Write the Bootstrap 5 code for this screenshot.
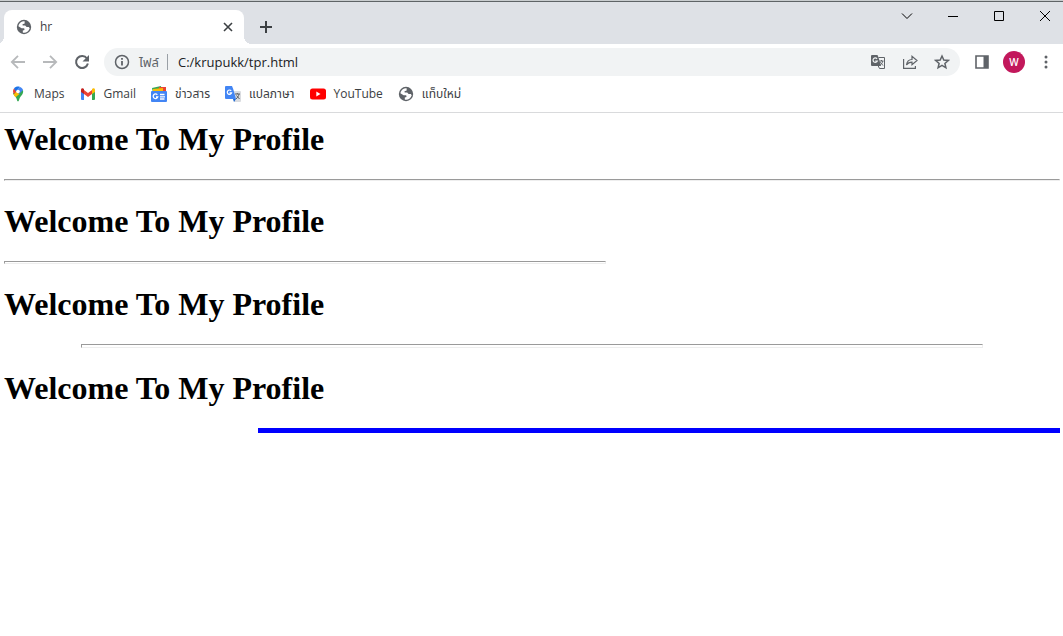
<!DOCTYPE html>
<html lang="th">
<head>
<meta charset="utf-8">
<meta name="viewport" content="width=device-width, initial-scale=1">
<title>hr</title>
<link href="https://cdn.jsdelivr.net/npm/bootstrap@5.3.0/dist/css/bootstrap.min.css" rel="stylesheet">
<style>
  body { font-family: "Open Sans", "Noto Sans Thai", sans-serif; font-size: 12px; line-height: 16px; color: #3c4043; background: #fff; }
  svg { display: block; flex: none; }
  button { border: 0; background: none; padding: 0; color: #3c4043; display: flex; align-items: center; justify-content: center; flex: none; }
  .tabstrip { height: 44px; background: #dee1e6; border-top: 1px solid #c9cdcf; box-shadow: inset 0 1px #5f6466; }
  .tab { position: relative; height: 34px; width: 240px; margin-left: 4px; padding: 0 10px 0 12px; background: #fff; border-radius: 8px 8px 0 0; }
  .tab::before, .tab::after { content: ""; position: absolute; bottom: 0; width: 8px; height: 8px; }
  .tab::before { left: -8px; background: radial-gradient(circle at 0 0, transparent 8px, #fff 8px); }
  .tab::after { right: -8px; background: radial-gradient(circle at 100% 0, transparent 8px, #fff 8px); }
  .new-tab { width: 44px; height: 34px; }
  .win { width: 46px; height: 30px; color: #000; }
  .win-close { width: 41px; padding-left: 5px; }
  .tool { width: 32px; height: 32px; color: #5f6368; }
  .toolbar { height: 36px; padding: 0 1px 0 2px; }
  .omnibox { height: 28px; border-radius: 14px; background: #f1f3f4; margin: 0 6px; padding: 0 2px 0 10px; color: #5f6368; }
  .omnibox label { padding: 0 8px 0 9px; font-size: 13px; }
  .url { min-width: 0; border: 0; border-left: 1px solid #9aa0a6; background: none; outline: 0; height: 16px; padding: 0 0 0 10px; font-size: 13px; color: #202124; }
  .avatar { width: 22px; height: 22px; border-radius: 50%; background: #c2185b; color: #fff; font-size: 10px; font-weight: 600; margin: 0 5px; }
  .bookmarks { height: 33px; padding: 0 10px 4px; gap: 15px; border-bottom: 1px solid #d9dadc; }
  .bookmarks a { color: #3c4043; text-decoration: none; white-space: nowrap; }
  .page { padding: 8px 3px 22px 4px; }
  .page h1 { font: bold 32px/36px "Liberation Serif", serif; color: #000; margin: 0; }
  .page hr { box-sizing: border-box; margin: 22px 0; max-width: 100%; opacity: 1; border: 1px solid; border-color: #9a9a9a #eee #eee #9a9a9a; height: 2px; }
  .page .rule-left { width: 602px; height: 3px; }
  .page .rule-center { width: 902px; height: 4px; margin-left: auto; margin-right: auto; }
  .page .rule-right { width: 802px; height: 5px; margin-left: auto; border: 0; background: #00f; }
</style>
</head>
<body>
<svg width="0" height="0" class="position-absolute" aria-hidden="true">
  <symbol id="globe" viewBox="0 0 16 16">
    <circle cx="8" cy="8" r="7.2" fill="#5f6368"/>
    <path fill="#fff" d="M8.600 2.200C6 1.900 3.600 3.500 2.800 5.700L2.400 7.300 5.600 9.200 8.200 9.300 8.500 11 6.800 11.600V13.500C9.800 14.300 13 12.300 13.700 9.200L12.800 8H10.600L9.200 6.500H6.700L6.500 5.200 8.700 4.500Z"/>
  </symbol>
</svg>
<header>
  <div class="tabstrip d-flex align-items-end">
    <div class="tab d-flex align-items-center gap-2">
      <svg width="16" height="16"><use href="#globe"/></svg>
      <span class="flex-grow-1">hr</span>
      <button aria-label="Close tab"><svg width="12" height="12" fill="none" stroke="currentColor" stroke-width="1.600"><path d="M2 2l8 8M10 2l-8 8"/></svg></button>
    </div>
    <button class="new-tab" aria-label="New tab"><svg width="14" height="18" fill="none" stroke="currentColor" stroke-width="2"><path d="M1 9h12M7 3v12"/></svg></button>
    <div class="d-flex ms-auto align-self-start">
      <button class="win" aria-label="Search tabs"><svg width="12" height="12" fill="none" stroke="currentColor"><path d="M1 3.500l5 5 5-5"/></svg></button>
      <button class="win" aria-label="Minimize"><svg width="12" height="12" fill="none" stroke="currentColor"><path d="M1 6.500h10"/></svg></button>
      <button class="win" aria-label="Maximize"><svg width="12" height="12" fill="none" stroke="currentColor"><path d="M1.500 1.500h9v9h-9z"/></svg></button>
      <button class="win win-close" aria-label="Close"><svg width="12" height="12" fill="none" stroke="currentColor"><path d="M1 1l10 10M11 1L1 11"/></svg></button>
    </div>
  </div>
  <div class="toolbar d-flex align-items-center">
    <button class="tool" aria-label="Back"><svg width="16" height="16" fill="none" stroke="#b7b9bb" stroke-width="1.800"><path d="M15 8H2M8 1.800L1.800 8 8 14.200"/></svg></button>
    <button class="tool" aria-label="Forward"><svg width="16" height="16" fill="none" stroke="#b7b9bb" stroke-width="1.800"><path d="M1 8h13M8 1.800L14.200 8 8 14.200"/></svg></button>
    <button class="tool" aria-label="Reload"><svg width="16" height="16" fill="none" stroke="currentColor" stroke-width="2"><path d="M13 4.500A6 6 0 1 0 13.900 9.500"/><path fill="currentColor" stroke="none" d="M15 1v6.500H8.500z"/></svg></button>
    <div class="omnibox d-flex align-items-center flex-grow-1">
      <svg width="16" height="16" fill="none" stroke="currentColor" stroke-width="1.500"><circle cx="8" cy="8" r="6.500"/><path stroke-width="1.800" d="M8 7v4.500M8 4v1.800"/></svg>
      <label for="url">ไฟล์</label>
      <input id="url" class="url flex-grow-1" type="text" value="C:/krupukk/tpr.html">
      <button class="tool" aria-label="Translate"><svg width="16" height="16"><path fill="#5f6368" d="M2 1h5.500l1 2.500L11 12H2a1 1 0 0 1-1-1V2a1 1 0 0 1 1-1z"/><path fill="none" stroke="#5f6368" d="M8.500 3.500h6v11h-5l-1.500-3"/><path fill="none" stroke="#f1f3f4" stroke-width="1.200" d="M7 4.800a2.200 2.200 0 1 0 .3 2.200H5.200"/><path fill="none" stroke="#5f6368" d="M9.300 7h4.200M11.500 6v1M12.800 7c-.3 2-1.500 3-2.600 4M10.300 8.200l2.700 3.300"/></svg></button>
      <button class="tool" aria-label="Share"><svg width="16" height="16" fill="none" stroke="currentColor" stroke-width="1.200"><path d="M1.600 5v9.400h11.800V12M4.500 11c.4-3.400 2.400-5.500 5.500-5.500V2.200l5 4.300-5 4.300V8.200c-2.500 0-4.200.7-5.500 2.800z"/></svg></button>
      <button class="tool" aria-label="Bookmark"><svg width="16" height="16" fill="none" stroke="currentColor" stroke-width="1.500"><path d="M8 2l1.800 4 4.500.4-3.400 3 1 4.400L8 11.400l-3.900 2.400 1-4.400-3.400-3L6.200 6z"/></svg></button>
    </div>
    <button class="tool" aria-label="Side panel"><svg width="16" height="16"><path fill="none" stroke="#5f6368" stroke-width="1.600" d="M2 2h12v12H2z"/><path fill="#5f6368" d="M9.500 2H14v12H9.500z"/></svg></button>
    <button class="avatar" aria-label="Profile">W</button>
    <button class="tool" aria-label="Menu"><svg width="16" height="16" fill="currentColor"><circle cx="8" cy="3" r="1.500"/><circle cx="8" cy="8" r="1.500"/><circle cx="8" cy="13" r="1.500"/></svg></button>
  </div>
  <nav class="bookmarks d-flex align-items-center" aria-label="Bookmarks">
    <a href="#" class="d-flex gap-2"><svg width="16" height="16"><path fill="#34a853" d="M3 7l10-3c.8 4-1.700 5.500-3 7.500-.9 1.500-.9 4-2 4s-1-2.500-2-4S3.200 8.500 3 7z"/><path fill="#fbbc04" d="M3.500 8.500L6.500 5l3 3-4 3.300z"/><path fill="#ea4335" d="M4 2.500L7 5 4 8C2.500 6 2.800 4 4 2.500z"/><path fill="#1a73e8" d="M4 2.500C5.500.6 8 .1 10 1L6 5.800z"/><path fill="#4285f4" d="M10 1c1.500.5 2.500 1.700 3 3L9 8 6.500 5z"/><circle cx="8" cy="5.500" r="1.800" fill="#fff"/></svg><span>Maps</span></a>
    <a href="#" class="d-flex gap-2"><svg width="16" height="16"><path fill="#4285f4" d="M1 4l3 2v8H2a1 1 0 0 1-1-1z"/><path fill="#34a853" d="M12 6l3-2v9a1 1 0 0 1-1 1h-2z"/><path fill="#ea4335" d="M4 4l4 3 4-3v4l-4 3-4-3z"/><path fill="#c5221f" d="M1 4c0-2 1.800-2.300 3-1v5L1 6z"/><path fill="#fbbc04" d="M15 4c0-2-1.800-2.300-3-1v5l3-2z"/></svg><span>Gmail</span></a>
    <a href="#" class="d-flex gap-2"><svg width="16" height="16"><path fill="#34a853" d="M1 2l9-2 1 7H2z"/><path fill="#ea4335" d="M8 1h7v6H7z"/><path fill="#fbbc04" d="M2 3l10-1v5H2z"/><rect y="5" width="16" height="11" rx="1" fill="#4285f4"/><path fill="none" stroke="#fff" stroke-width="1.300" d="M6.300 8.800a2.300 2.300 0 1 0 .4 2.200H5M9 8.500h4.500M9 10.800h5M9 13h4.500"/></svg><span>ข่าวสาร</span></a>
    <a href="#" class="d-flex gap-2"><svg width="16" height="16"><path fill="#dadce0" d="M7 5h8a1 1 0 0 1 1 1v9a1 1 0 0 1-1 1H9z"/><path fill="#4285f4" d="M1 0h6l1.200 3L11 13H1a1 1 0 0 1-1-1V1a1 1 0 0 1 1-1z"/><path fill="#1967d2" d="M8 13h3l-2 3z"/><path fill="none" stroke="#fff" stroke-width="1.200" d="M6.200 4.800a2.200 2.200 0 1 0 .4 2H4.500"/><path fill="none" stroke="#5f6368" d="M10 8h5M12.300 7v1M14 8c-.4 2.400-1.600 3.600-3 5M11.500 9.500l3 3.500"/></svg><span>แปลภาษา</span></a>
    <a href="#" class="d-flex gap-2"><svg width="16" height="16"><rect y="2.500" width="16" height="11" rx="2.500" fill="#f00"/><path fill="#fff" d="M6.300 5.600v4.800L10.500 8z"/></svg><span>YouTube</span></a>
    <a href="#" class="d-flex gap-2"><svg width="16" height="16"><use href="#globe"/></svg><span>แท็บใหม่</span></a>
  </nav>
</header>
<main class="page">
  <h1>Welcome To My Profile</h1>
  <hr>
  <h1>Welcome To My Profile</h1>
  <hr class="rule-left">
  <h1>Welcome To My Profile</h1>
  <hr class="rule-center">
  <h1>Welcome To My Profile</h1>
  <hr class="rule-right">
</main>
<script src="https://cdn.jsdelivr.net/npm/bootstrap@5.3.0/dist/js/bootstrap.bundle.min.js"></script>
</body>
</html>
